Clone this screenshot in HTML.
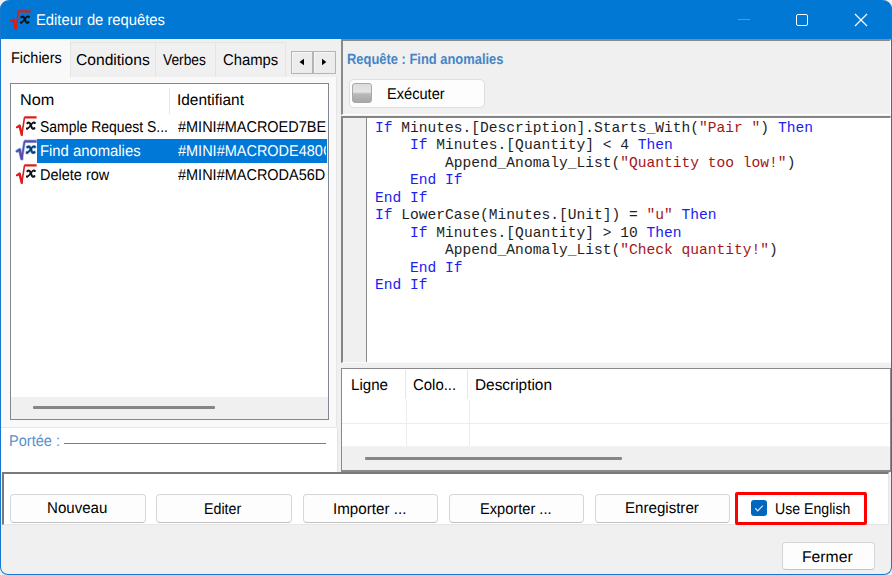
<!DOCTYPE html>
<html><head><meta charset="utf-8">
<style>
*{margin:0;padding:0;box-sizing:border-box}
html,body{width:892px;height:575px;overflow:hidden;background:#eeeeee}
body{position:relative;font-family:"Liberation Sans",sans-serif;color:#000}
.a{position:absolute}
.t{position:absolute;white-space:pre;line-height:1;transform-origin:0 0;text-rendering:geometricPrecision}
.btn{position:absolute;background:#fdfdfd;border:1px solid #d6d6d6;border-bottom-color:#c2c2c2;border-radius:4px}
.code{position:absolute;left:375px;font-family:"Liberation Mono",monospace;font-size:14.6px;white-space:pre;line-height:1;color:#1e1e1e}
.k{color:#2020ee}
.s{color:#a31515}
</style></head><body>
<div class="a" style="left:0;top:0;width:892px;height:575px;border-radius:9.5px 9.5px 8px 8px;overflow:hidden;background:#f0f0f0">

<div class="a" style="left:0;top:0;width:892px;height:39px;background:#0078d4"></div>
<svg class="a" style="left:8px;top:6.5px" width="26" height="25" viewBox="0 0 26 25"><path d="M3 14.2 L5.6 12.8" stroke="#e01a1a" stroke-width="2.2" stroke-linecap="round"/>
<path d="M5.6 12.8 L7.8 21.8" stroke="#e01a1a" stroke-width="2.5" stroke-linecap="round"/>
<path d="M7.8 21.8 L10.5 4.4" stroke="#e01a1a" stroke-width="1.6"/>
<path d="M10.3 4.3 L22.6 4.3" stroke="#e01a1a" stroke-width="2.2"/>
<g transform="translate(16.8 12.8) scale(0.9 0.94) translate(-16.8 -12.8)"><path d="M13 10 Q15.2 8.4 16.4 11.2 L17.8 14.6 Q18.8 16.6 20.8 15.4" stroke="#111" stroke-width="2.3" fill="none" stroke-linecap="round"/>
<path d="M21.2 9.6 Q20 8.6 18.6 10 L14.6 14.6 Q13.4 16.2 12.4 15.6" stroke="#111" stroke-width="1.7" fill="none" stroke-linecap="round"/>
<circle cx="21.1" cy="9.7" r="1.2" fill="#111"/><circle cx="12.6" cy="15.9" r="1.2" fill="#111"/></g></svg>
<div class="t" style="left:35.9px;top:13px;font-size:15.6px;transform:scaleX(0.947);color:#ffffff;">Editeur de requêtes</div>
<div class="a" style="left:738px;top:19px;width:12px;height:1px;background:#4d9be0"></div>
<div class="a" style="left:796px;top:14px;width:12px;height:12px;border:1.2px solid #fff;border-radius:2px"></div>
<svg class="a" style="left:854px;top:13px" width="14" height="14" viewBox="0 0 14 14"><path d="M1 1 L13 13 M13 1 L1 13" stroke="#fff" stroke-width="1.2"/></svg>
<div class="a" style="left:1px;top:39px;width:340px;height:433px;background:#f0f0f0;border-top:1px solid #fbfbfb"></div>
<div class="a" style="left:1px;top:40px;width:69px;height:38px;background:#f9f9f9"></div>
<div class="a" style="left:70px;top:42px;width:86px;height:35px;background:#f0f0f0;border:1px solid #e4e4e4;border-right:none;border-bottom:none"></div>
<div class="a" style="left:155px;top:42px;width:60px;height:35px;background:#f0f0f0;border:1px solid #e4e4e4;border-right:none;border-bottom:none"></div>
<div class="a" style="left:215px;top:42px;width:71px;height:35px;background:#f0f0f0;border:1px solid #e4e4e4;border-bottom:none"></div>
<div class="t" style="left:10.8px;top:51px;font-size:15.6px;transform:scaleX(0.93);color:#000000;">Fichiers</div>
<div class="t" style="left:75.6px;top:53px;font-size:15.6px;transform:scaleX(1.001);color:#000000;">Conditions</div>
<div class="t" style="left:163.3px;top:53px;font-size:15.6px;transform:scaleX(0.883);color:#000000;">Verbes</div>
<div class="t" style="left:222.8px;top:53px;font-size:15.6px;transform:scaleX(0.951);color:#000000;">Champs</div>
<div class="a" style="left:291px;top:51px;width:22px;height:23px;background:#ececec;border:1px solid #b4b4b4;box-shadow:inset 1px 1px 0 #f6f6f6"></div>
<div class="a" style="left:313px;top:51px;width:23px;height:23px;background:#ececec;border:1px solid #b4b4b4;box-shadow:inset 1px 1px 0 #f6f6f6"></div>
<svg class="a" style="left:291px;top:51px" width="45" height="23"><path d="M8.5 11 L13 7.8 L13 14.2Z" fill="#000"/><path d="M31 7.8 L35.3 11 L31 14.2Z" fill="#000"/></svg>
<div class="a" style="left:1px;top:77px;width:336px;height:351px;background:#f9f9f9;border-right:1px solid #e6e6e6;border-bottom:1px solid #e6e6e6"></div>
<div class="a" style="left:10px;top:83px;width:319px;height:337px;background:#fff;border:1px solid #828790"></div>
<div class="t" style="left:19.5px;top:93px;font-size:15.6px;transform:scaleX(1.042);color:#000000;">Nom</div>
<div class="a" style="left:169px;top:88px;width:1px;height:26px;background:#e5e5e5"></div>
<div class="t" style="left:177.1px;top:93px;font-size:15.6px;transform:scaleX(0.99);color:#000000;">Identifiant</div>
<div class="a" style="left:37px;top:139px;width:290px;height:24px;background:#0078d7"></div>
<div class="t" style="left:39.6px;top:120px;font-size:15.6px;transform:scaleX(0.895);color:#000000;">Sample Request S...</div>
<div class="t" style="left:39.7px;top:144px;font-size:15.6px;transform:scaleX(0.951);color:#ffffff;">Find anomalies</div>
<div class="t" style="left:39.8px;top:168px;font-size:15.6px;transform:scaleX(0.93);color:#000000;">Delete row</div>
<div class="a" style="left:172px;top:110px;width:154px;height:80px;overflow:hidden">
<div class="t" style="left:5.5px;top:10px;font-size:15.6px;transform:scaleX(0.929);color:#000000">#MINI#MACROED7BE2</div>
<div class="t" style="left:5.5px;top:34px;font-size:15.6px;transform:scaleX(0.929);color:#ffffff">#MINI#MACRODE480C</div>
<div class="t" style="left:5.5px;top:58px;font-size:15.6px;transform:scaleX(0.929);color:#000000">#MINI#MACRODA56D</div>
</div>
<svg class="a" style="left:14px;top:113px" width="26" height="25" viewBox="0 0 26 25"><path d="M3 14.2 L5.6 12.8" stroke="#e01a1a" stroke-width="2.2" stroke-linecap="round"/>
<path d="M5.6 12.8 L7.8 21.8" stroke="#e01a1a" stroke-width="2.5" stroke-linecap="round"/>
<path d="M7.8 21.8 L10.5 4.4" stroke="#e01a1a" stroke-width="1.6"/>
<path d="M10.3 4.3 L22.6 4.3" stroke="#e01a1a" stroke-width="2.2"/>
<g transform="translate(16.8 12.8) scale(0.9 0.94) translate(-16.8 -12.8)"><path d="M13 10 Q15.2 8.4 16.4 11.2 L17.8 14.6 Q18.8 16.6 20.8 15.4" stroke="#111" stroke-width="2.3" fill="none" stroke-linecap="round"/>
<path d="M21.2 9.6 Q20 8.6 18.6 10 L14.6 14.6 Q13.4 16.2 12.4 15.6" stroke="#111" stroke-width="1.7" fill="none" stroke-linecap="round"/>
<circle cx="21.1" cy="9.7" r="1.2" fill="#111"/><circle cx="12.6" cy="15.9" r="1.2" fill="#111"/></g></svg>
<svg class="a" style="left:14px;top:137px" width="26" height="25" viewBox="0 0 26 25"><g opacity="0.55" transform="translate(0 0)"><path d="M3 14.2 L5.6 12.8" stroke="#5aa0e6" stroke-width="3.6" stroke-linecap="round"/>
<path d="M5.6 12.8 L7.8 21.8" stroke="#5aa0e6" stroke-width="3.8" stroke-linecap="round"/>
<path d="M7.8 21.8 L10.5 4.4" stroke="#5aa0e6" stroke-width="3"/>
<path d="M10.3 4.3 L22.6 4.3" stroke="#5aa0e6" stroke-width="3.6"/>
<g transform="translate(16.8 12.8) scale(0.9 0.94) translate(-16.8 -12.8)"><path d="M13 10 Q15.2 8.4 16.4 11.2 L17.8 14.6 Q18.8 16.6 20.8 15.4" stroke="#5aa0e6" stroke-width="3.6" fill="none" stroke-linecap="round"/>
<path d="M21.2 9.6 Q20 8.6 18.6 10 L14.6 14.6 Q13.4 16.2 12.4 15.6" stroke="#5aa0e6" stroke-width="3" fill="none" stroke-linecap="round"/>
<circle cx="21.1" cy="9.7" r="2" fill="#5aa0e6"/><circle cx="12.6" cy="15.9" r="2" fill="#5aa0e6"/></g></g><path d="M3 14.2 L5.6 12.8" stroke="#5e4aa6" stroke-width="2.2" stroke-linecap="round"/>
<path d="M5.6 12.8 L7.8 21.8" stroke="#5e4aa6" stroke-width="2.5" stroke-linecap="round"/>
<path d="M7.8 21.8 L10.5 4.4" stroke="#5e4aa6" stroke-width="1.6"/>
<path d="M10.3 4.3 L22.6 4.3" stroke="#5e4aa6" stroke-width="2.2"/>
<g transform="translate(16.8 12.8) scale(0.9 0.94) translate(-16.8 -12.8)"><path d="M13 10 Q15.2 8.4 16.4 11.2 L17.8 14.6 Q18.8 16.6 20.8 15.4" stroke="#0b3a72" stroke-width="2.3" fill="none" stroke-linecap="round"/>
<path d="M21.2 9.6 Q20 8.6 18.6 10 L14.6 14.6 Q13.4 16.2 12.4 15.6" stroke="#0b3a72" stroke-width="1.7" fill="none" stroke-linecap="round"/>
<circle cx="21.1" cy="9.7" r="1.2" fill="#0b3a72"/><circle cx="12.6" cy="15.9" r="1.2" fill="#0b3a72"/></g></svg>
<svg class="a" style="left:14px;top:161px" width="26" height="25" viewBox="0 0 26 25"><path d="M3 14.2 L5.6 12.8" stroke="#e01a1a" stroke-width="2.2" stroke-linecap="round"/>
<path d="M5.6 12.8 L7.8 21.8" stroke="#e01a1a" stroke-width="2.5" stroke-linecap="round"/>
<path d="M7.8 21.8 L10.5 4.4" stroke="#e01a1a" stroke-width="1.6"/>
<path d="M10.3 4.3 L22.6 4.3" stroke="#e01a1a" stroke-width="2.2"/>
<g transform="translate(16.8 12.8) scale(0.9 0.94) translate(-16.8 -12.8)"><path d="M13 10 Q15.2 8.4 16.4 11.2 L17.8 14.6 Q18.8 16.6 20.8 15.4" stroke="#111" stroke-width="2.3" fill="none" stroke-linecap="round"/>
<path d="M21.2 9.6 Q20 8.6 18.6 10 L14.6 14.6 Q13.4 16.2 12.4 15.6" stroke="#111" stroke-width="1.7" fill="none" stroke-linecap="round"/>
<circle cx="21.1" cy="9.7" r="1.2" fill="#111"/><circle cx="12.6" cy="15.9" r="1.2" fill="#111"/></g></svg>
<div class="a" style="left:11px;top:397px;width:317px;height:22px;background:#f0f0f0"></div>
<div class="a" style="left:33px;top:406px;width:182px;height:3px;background:#868686;border-radius:1px"></div>
<div class="a" style="left:1px;top:428px;width:337px;height:44px;background:#fff;border-right:1px solid #e3e3e3"></div>
<div class="t" style="left:8.5px;top:434px;font-size:15.6px;transform:scaleX(0.933);color:#5a8fca;">Portée :</div>
<div class="a" style="left:64px;top:443px;width:262px;height:1px;background:#4d87c3"></div>
<div class="a" style="left:341px;top:39px;width:550px;height:433px;background:#f0f0f0"></div>
<div class="a" style="left:341px;top:39px;width:550px;height:76px;border-top:2px solid #8a8a8a;border-left:2px solid #8a8a8a;border-right:1px solid #fff;border-bottom:1px solid #fff"></div>
<div class="t" style="left:347.2px;top:53px;font-size:14.8px;transform:scaleX(0.873);color:#4585c5;font-weight:bold;">Requête : Find anomalies</div>
<div class="btn" style="left:349px;top:79px;width:136px;height:29px;border-radius:5px;border-color:#dedede"></div>
<div class="a" style="left:352px;top:83px;width:20px;height:20px;border-radius:3px;border:1px solid #a8a8a8;background:linear-gradient(#dcdcdc,#e4e4e4 45%,#b9b9b9 55%,#a8a8a8)"></div>
<div class="t" style="left:386.6px;top:87px;font-size:15.6px;transform:scaleX(0.937);color:#000000;">Exécuter</div>
<div class="a" style="left:341px;top:116px;width:550px;height:247px;background:#fff;border-top:2px solid #858585;border-left:2px solid #858585;border-right:1px solid #fff;border-bottom:1px solid #fafafa"></div>
<div class="a" style="left:343px;top:118px;width:24px;height:244px;background:#f0f0f0;border-right:1px solid #8a8a8a"></div>
<div class="code" style="top:120.8px"><span class="k">If</span> Minutes.[Description].Starts_With(<span class="s">&quot;Pair &quot;</span>) <span class="k">Then</span></div>
<div class="code" style="top:138.3px">    <span class="k">If</span> Minutes.[Quantity] &lt; 4 <span class="k">Then</span></div>
<div class="code" style="top:155.8px">        Append_Anomaly_List(<span class="s">&quot;Quantity too low!&quot;</span>)</div>
<div class="code" style="top:173.3px">    <span class="k">End If</span></div>
<div class="code" style="top:190.8px"><span class="k">End If</span></div>
<div class="code" style="top:208.3px"><span class="k">If</span> LowerCase(Minutes.[Unit]) = <span class="s">&quot;u&quot;</span> <span class="k">Then</span></div>
<div class="code" style="top:225.8px">    <span class="k">If</span> Minutes.[Quantity] &gt; 10 <span class="k">Then</span></div>
<div class="code" style="top:243.3px">        Append_Anomaly_List(<span class="s">&quot;Check quantity!&quot;</span>)</div>
<div class="code" style="top:260.8px">    <span class="k">End If</span></div>
<div class="code" style="top:278.3px"><span class="k">End If</span></div>
<div class="a" style="left:341px;top:368px;width:550px;height:104px;background:#fff;border-top:1px solid #8a8a8a;border-left:1px solid #8a8a8a;border-right:1px solid #8a8a8a;border-bottom:2px solid #8a8a8a"></div>
<div class="t" style="left:350.5px;top:378px;font-size:15.6px;transform:scaleX(0.968);color:#000000;">Ligne</div>
<div class="t" style="left:413.2px;top:378px;font-size:15.6px;transform:scaleX(0.958);color:#000000;">Colo...</div>
<div class="t" style="left:475.0px;top:378px;font-size:15.6px;transform:scaleX(0.987);color:#000000;">Description</div>
<div class="a" style="left:405px;top:370px;width:1px;height:29px;background:#e6e6e6"></div>
<div class="a" style="left:467px;top:370px;width:1px;height:29px;background:#e6e6e6"></div>
<div class="a" style="left:406px;top:400px;width:1px;height:47px;background:#ececec"></div>
<div class="a" style="left:469px;top:400px;width:1px;height:47px;background:#ececec"></div>
<div class="a" style="left:342px;top:423px;width:547px;height:1px;background:#ececec"></div>
<div class="a" style="left:342px;top:446px;width:547px;height:1px;background:#f4f4f4"></div>
<div class="a" style="left:342px;top:447px;width:548px;height:23px;background:#f0f0f0"></div>
<div class="a" style="left:365px;top:457px;width:257px;height:3px;background:#868686;border-radius:1px"></div>
<div class="a" style="left:2px;top:472px;width:887px;height:53px;background:#fff;border-top:2px solid #7a7a7a;border-left:2px solid #7a7a7a;border-right:1px solid #e6e6e6;border-bottom:1px solid #e6e6e6"></div>
<div class="btn" style="left:10px;top:494px;width:136px;height:29px"></div>
<div class="btn" style="left:156px;top:494px;width:136px;height:29px"></div>
<div class="btn" style="left:303px;top:494px;width:135px;height:29px"></div>
<div class="btn" style="left:449px;top:494px;width:135px;height:29px"></div>
<div class="btn" style="left:595px;top:494px;width:135px;height:29px"></div>
<div class="t" style="left:46.6px;top:501px;font-size:15.6px;transform:scaleX(0.966);color:#000000;">Nouveau</div>
<div class="t" style="left:204.4px;top:502px;font-size:15.6px;transform:scaleX(0.912);color:#000000;">Editer</div>
<div class="t" style="left:333.4px;top:502px;font-size:15.6px;transform:scaleX(0.973);color:#000000;">Importer ...</div>
<div class="t" style="left:480.4px;top:502px;font-size:15.6px;transform:scaleX(0.938);color:#000000;">Exporter ...</div>
<div class="t" style="left:624.5px;top:501px;font-size:15.6px;transform:scaleX(0.968);color:#000000;">Enregistrer</div>
<div class="a" style="left:735px;top:492px;width:132px;height:33px;border:3px solid #ff0000;border-radius:2px"></div>
<div class="a" style="left:751px;top:500px;width:16px;height:16px;border-radius:3px;background:#0067c0"></div>
<svg class="a" style="left:751px;top:500px" width="16" height="16"><path d="M4.2 8.3 L6.8 10.8 L11.8 5.6" fill="none" stroke="#d6e6f7" stroke-width="1.2"/></svg>
<div class="t" style="left:774.6px;top:502px;font-size:15.6px;transform:scaleX(0.905);color:#000000;">Use English</div>
<div class="btn" style="left:782px;top:542px;width:93px;height:28px"></div>
<div class="t" style="left:801.6px;top:550px;font-size:15.6px;transform:scaleX(1.008);color:#000000;">Fermer</div>
</div>
<div class="a" style="left:0;top:0;width:892px;height:575px;border-radius:9.5px 9.5px 8px 8px;border:1px solid #1777d0;border-top:none"></div>
</body></html>
